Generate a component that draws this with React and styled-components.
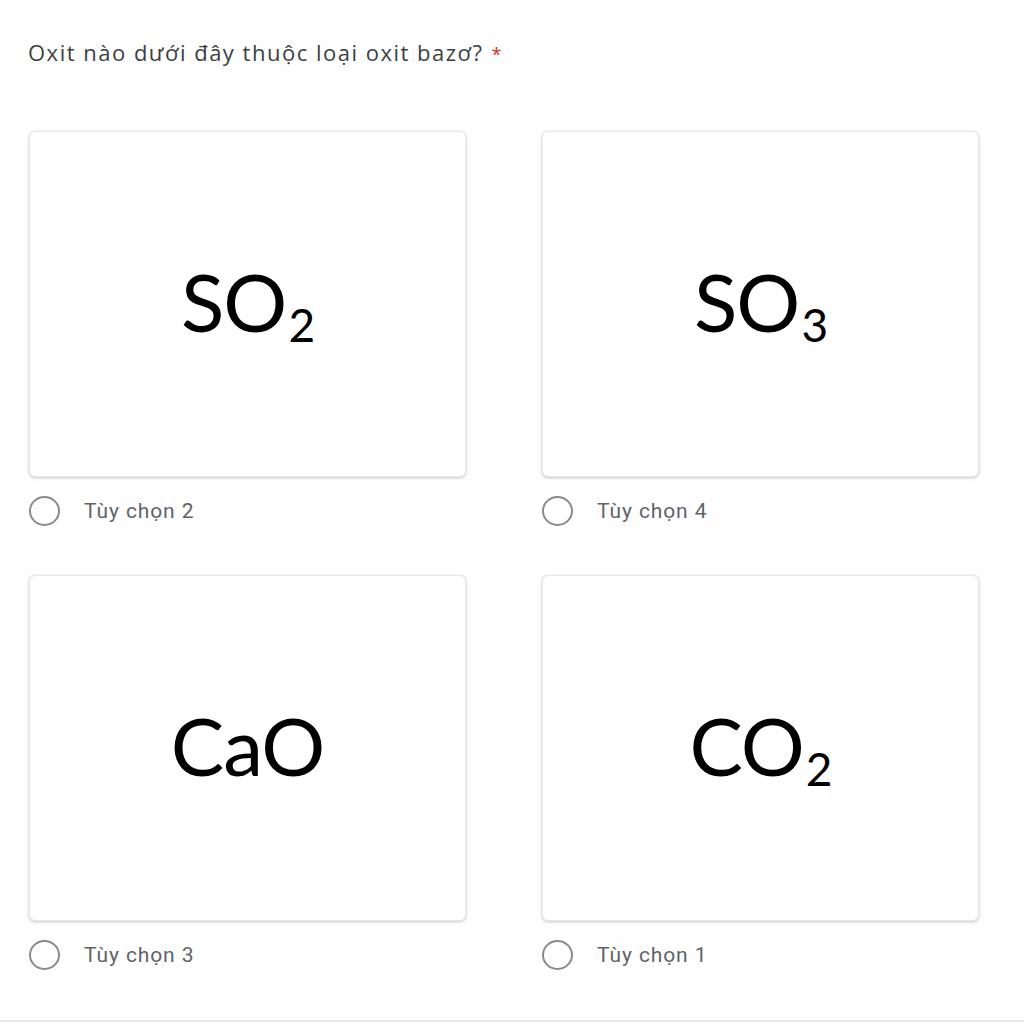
import React from 'react';
import styled, { createGlobalStyle } from 'styled-components';

const GlobalStyle = createGlobalStyle`
    html, body {
        margin: 0;
        padding: 0;
        background: #fefefe;
    }
`;

const options = [
    { id: 'o2', base: 'SO', sub: '2', label: 'Tùy chọn 2' },
    { id: 'o4', base: 'SO', sub: '3', label: 'Tùy chọn 4' },
    { id: 'o3', base: 'CaO', sub: null, label: 'Tùy chọn 3' },
    { id: 'o1', base: 'CO', sub: '2', label: 'Tùy chọn 1' },
];

export default function App() {
    return (
        <>
            <GlobalStyle />
            <Page>
                <Question>
                    Oxit nào dưới đây thuộc loại oxit bazơ?
                    <Required>*</Required>
                </Question>
                <Grid>
                    {options.map(opt => (
                        <Option key={opt.id}>
                            <ImageCard>
                                <Formula>
                                    {opt.base}
                                    {opt.sub && <Sub>{opt.sub}</Sub>}
                                </Formula>
                            </ImageCard>
                            <RadioRow>
                                <Radio />
                                <Label>{opt.label}</Label>
                            </RadioRow>
                        </Option>
                    ))}
                </Grid>
            </Page>
        </>
    );
}

const Page = styled.div`
    width: 1024px;
    height: 1022px;
    box-sizing: border-box;
    padding: 37px 28px 0 28px;
    border-bottom: 2px solid #e6e6e6;
    background: #fefefe;
`;

const Question = styled.div`
    font-family: "Open Sans", Roboto, sans-serif;
    font-size: 22px;
    line-height: 30px;
    color: #3c4043;
    letter-spacing: 1.5px;
`;

const Required = styled.span`
    color: #d93025;
    margin-left: 8px;
    font-size: 18px;
    letter-spacing: 0;
`;

const Grid = styled.div`
    display: grid;
    grid-template-columns: 437px 437px;
    column-gap: 76px;
    row-gap: 49px;
    margin-top: 62px;
    padding-left: 1px;
`;

const Option = styled.div`
    display: flex;
    flex-direction: column;
`;

const ImageCard = styled.div`
    height: 346px;
    box-sizing: border-box;
    border-radius: 6px;
    background: #ffffff;
    border: 1px solid #e8e8e8;
    box-shadow: 0 1px 3px rgba(60, 64, 67, 0.3);
    display: flex;
    align-items: center;
    justify-content: center;
    padding-bottom: 6px;
`;

const Formula = styled.div`
    font-family: Lato, "Open Sans", sans-serif;
    font-size: 80px;
    line-height: 1;
    color: #000;
    white-space: nowrap;
    letter-spacing: -1px;
`;

const Sub = styled.span`
    font-size: 46px;
    position: relative;
    top: 10px;
    margin-left: 2px;
`;

const RadioRow = styled.div`
    display: flex;
    align-items: center;
    gap: 24px;
    margin-top: 19px;
    height: 30px;
`;

const Radio = styled.span`
    width: 31px;
    height: 30px;
    box-sizing: border-box;
    border-radius: 50%;
    border: 2px solid #8a8a8a;
    flex-shrink: 0;
`;

const Label = styled.span`
    font-family: Roboto, "Noto Sans", sans-serif;
    font-size: 21px;
    color: #5f6368;
    letter-spacing: 0.9px;
`;
